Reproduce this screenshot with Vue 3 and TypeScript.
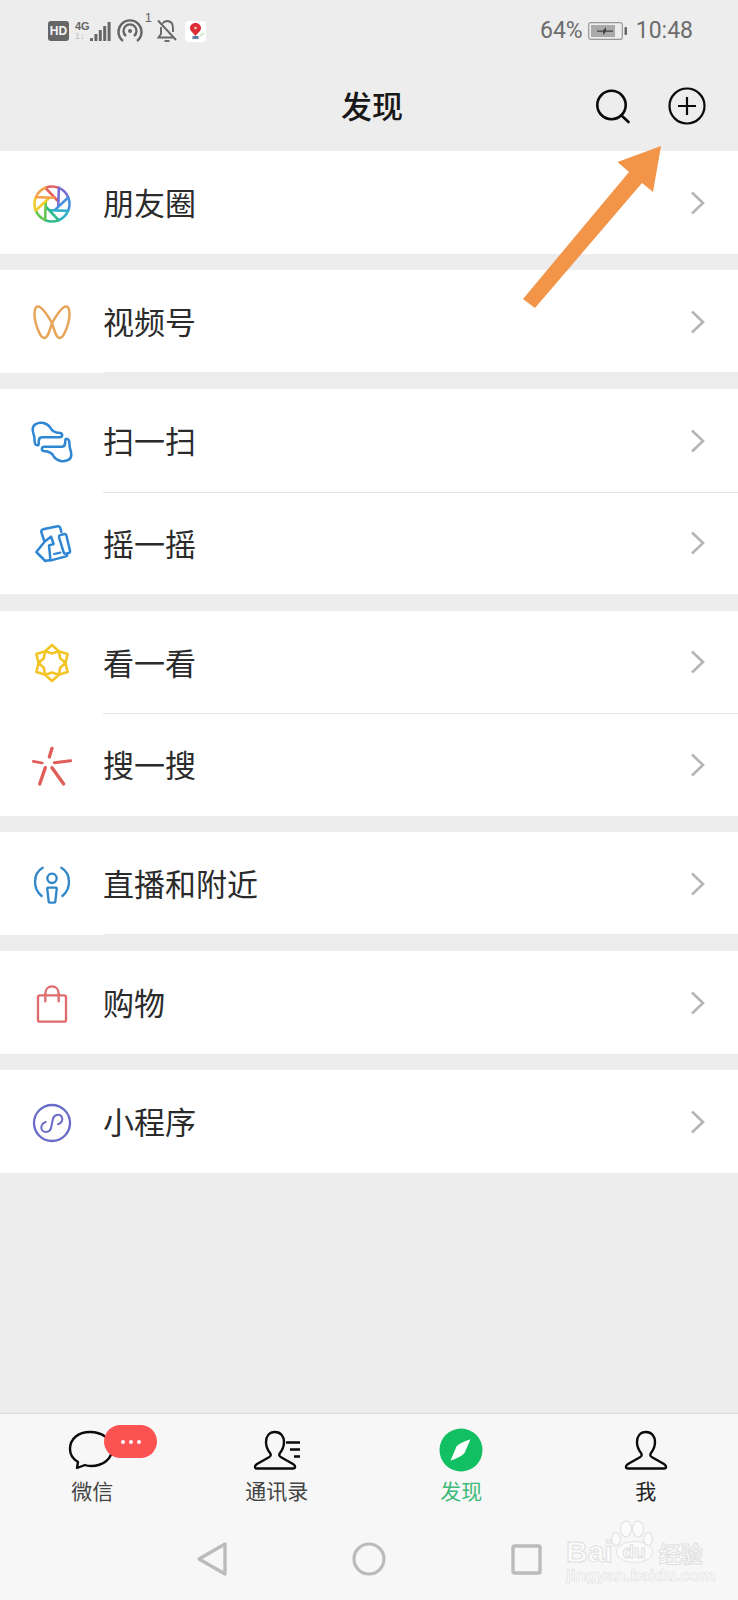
<template>
  <div class="phone">
    <header class="top">
      <div class="status">
        <span class="hd">HD</span>
        <span class="net"><b>4G</b><i>1↓</i></span>
        <svg class="bars" width="22" height="22" viewBox="0 0 22 22">
          <rect v-for="(h, i) in barHeights" :key="i" :x="i * 4.4 + 1" :y="21 - h" width="3" :height="h" rx="0.6" fill="#666" />
        </svg>
        <svg class="hotspot" width="26" height="26" viewBox="0 0 26 26" fill="none" stroke="#666" stroke-width="2.4">
          <path d="M6 23 A11.5 11.5 0 1 1 20 23" />
          <path d="M9 18 A6.5 6.5 0 1 1 17 18" />
          <circle cx="13" cy="13" r="2" fill="#666" stroke="none" />
        </svg>
        <span class="hot-count">1</span>
        <svg class="bell" width="22" height="24" viewBox="0 0 22 24" fill="none" stroke="#666" stroke-width="1.9">
          <path d="M5 8 V15 L2.5 18.5 H17" />
          <path d="M6.5 4.5 C8 2.5 10 2 11 2 C15 2 17 5 17 9 V13" />
          <path d="M2 1.5 L20 21" />
          <path d="M8.5 22 H13.5" />
        </svg>
        <span class="app-tile">
          <svg width="21" height="21" viewBox="0 0 21 21">
            <path d="M10.5 2 C6.8 2 5 4.8 5 7.2 C5 10.4 8.6 11.8 10.5 15 C12.4 11.8 16 10.4 16 7.2 C16 4.8 14.2 2 10.5 2Z" fill="#dd2c36" />
            <rect x="7.5" y="15" width="6" height="3" fill="#5d7fa8" />
            <path d="M15 15 L19 12" stroke="#cfe8c4" stroke-width="2" />
            <circle cx="10.5" cy="7" r="1.3" fill="#f7c9c9" />
          </svg>
        </span>
        <span class="spacer"></span>
        <span class="percent">64%</span>
        <svg class="battery" width="40" height="20" viewBox="0 0 40 20">
          <rect x="0.7" y="1.7" width="33.6" height="16.6" rx="2" fill="none" stroke="#999" stroke-width="1.2" />
          <rect x="3" y="4" width="24" height="12" fill="#aaa" />
          <path d="M9 9.5 H15 L18 6 V9.5 H25 V10.8 H18 L15 14 V10.8 H9Z" fill="#444" />
          <rect x="36.5" y="6" width="2.5" height="8" rx="0.8" fill="#666" />
        </svg>
        <span class="clock">10:48</span>
      </div>
      <div class="titlebar">
        <h1>发现</h1>
        <div class="actions">
          <svg width="40" height="40" viewBox="0 0 40 40" fill="none" stroke="#0a0a0a" stroke-width="2.6" stroke-linecap="round">
            <circle cx="18.5" cy="19" r="14.2" />
            <path d="M28.5 29.5 L35.5 36" />
          </svg>
          <svg width="40" height="40" viewBox="0 0 40 40" fill="none" stroke="#0a0a0a" stroke-width="2.2">
            <circle cx="20" cy="20" r="17.5" />
            <path d="M11 20 H29 M20 11 V29" />
          </svg>
        </div>
      </div>
    </header>

    <main class="list">
      <section v-for="(group, g) in groups" :key="g" class="group">
        <template v-for="(row, r) in group" :key="row.label">
          <div v-if="r > 0" class="divider"></div>
          <div class="row">
            <svg class="row-icon" width="44" height="44" :viewBox="row.box" fill="none" stroke-linecap="round" stroke-linejoin="round">
              <path
                v-for="(p, i) in row.paths"
                :key="i"
                :d="p.d"
                :stroke="p.color"
                :stroke-width="p.width"
                :fill="p.fill ?? 'none'"
                :transform="p.transform"
              />
            </svg>
            <span class="label">{{ row.label }}</span>
            <svg class="chevron" width="16" height="24" viewBox="0 0 16 24" fill="none" stroke="#b5b5b5" stroke-width="2.6">
              <path d="M2 1.5 L13 12 L2 22.5" />
            </svg>
          </div>
        </template>
        <div v-if="trailingLine.includes(g)" class="divider faint"></div>
      </section>
    </main>

    <footer class="bottom">
      <nav class="tabs">
        <div class="tab">
          <svg width="48" height="40" viewBox="0 0 48 40" fill="none" stroke="#0a0a0a" stroke-width="2.4" stroke-linejoin="round">
            <path d="M22 2 C10 2 2 9 2 19 C2 25 5 29 10 32 L9 38 L17 35 C19 36 21 36 23 36 C35 36 44 29 44 19 C44 9 34 2 22 2Z" />
          </svg>
          <span class="tab-label">微信</span>
          <span class="badge"><i></i><i></i><i></i></span>
        </div>
        <div class="tab">
          <svg width="48" height="40" viewBox="0 0 48 40" fill="none" stroke="#0a0a0a" stroke-width="2.4" stroke-linejoin="round">
            <path :d="personPath" />
            <path d="M33 12.5 H47 M37 19.5 H47 M41 26.5 H47" stroke-width="2.6" />
          </svg>
          <span class="tab-label">通讯录</span>
        </div>
        <div class="tab">
          <svg width="44" height="44" viewBox="0 0 44 44" class="found-icon">
            <circle cx="22" cy="22" r="21.5" fill="#12bf62" />
            <path d="M31.5 11.3 Q21 14.5 17.5 18.5 L11.5 32.7 Q22 29 25.5 25Z" fill="#fff" />
          </svg>
          <span class="tab-label active">发现</span>
        </div>
        <div class="tab">
          <svg width="44" height="40" viewBox="0 0 44 40" fill="none" stroke="#0a0a0a" stroke-width="2.4" stroke-linejoin="round">
            <path :d="personPath" />
          </svg>
          <span class="tab-label dark">我</span>
        </div>
      </nav>
      <div class="sysnav">
        <svg width="32" height="36" viewBox="0 0 32 36" fill="none" stroke="#bbb" stroke-width="3.4" stroke-linejoin="round">
          <path d="M29 3 L3 18 L29 33Z" />
        </svg>
        <svg width="34" height="34" viewBox="0 0 34 34" fill="none" stroke="#bbb" stroke-width="3.2">
          <circle cx="17" cy="17" r="15" />
        </svg>
        <svg width="31" height="31" viewBox="0 0 31 31" fill="none" stroke="#bbb" stroke-width="3.4" stroke-linejoin="round">
          <rect x="2" y="2" width="27" height="27" rx="1.5" />
        </svg>
      </div>
    </footer>

    <div class="watermark">
      <svg class="paw" width="42" height="30" viewBox="0 0 42 30" fill="#fbfbfb" stroke="#e4e4e4" stroke-width="1.3">
        <ellipse cx="5" cy="19" rx="4.5" ry="6.5" />
        <ellipse cx="15" cy="9" rx="5.5" ry="8" />
        <ellipse cx="27" cy="9" rx="5.5" ry="8" />
        <ellipse cx="37" cy="19" rx="4.5" ry="6.5" />
      </svg>
      <div class="wm-main"><span>Bai</span><em>du</em><span class="wm-cn">经验</span></div>
      <div class="wm-url">jingyan.baidu.com</div>
    </div>

    <svg class="pointer" width="150" height="170" viewBox="0 0 150 170">
      <path d="M143 1 L99.5 17 L111 27 L5 154 L17 163 L124 38 L135 47Z" fill="#f29549" />
    </svg>
  </div>
</template>

<script setup lang="ts">
interface IconPath {
  d: string;
  color: string;
  width: number;
  fill?: string;
  transform?: string;
}

interface Row {
  label: string;
  box: string;
  paths: IconPath[];
}

const barHeights = [3, 7, 11, 15, 19];

// groups whose single row still keeps the inset line under it
const trailingLine = [1, 4];

const personPath =
  "M22 2 C16 2 13 6.5 13 12 C13 17 15 20.5 17 23 C18.5 25 17.5 26.5 15.5 27.5 L4 34 C1 36 1.5 38.5 4 38.5 H40 C42.5 38.5 43 36 40 34 L28.5 27.5 C26.5 26.5 25.5 25 27 23 C29 20.5 31 17 31 12 C31 6.5 28 2 22 2Z";

function polar(cx: number, cy: number, r: number, deg: number) {
  const a = (deg * Math.PI) / 180;
  return `${(cx + r * Math.cos(a)).toFixed(2)} ${(cy + r * Math.sin(a)).toFixed(2)}`;
}

function circle(cx: number, cy: number, r: number) {
  return `M${cx - r} ${cy} a${r} ${r} 0 1 0 ${r * 2} 0 a${r} ${r} 0 1 0 ${-r * 2} 0Z`;
}

// shutter: one coloured arc and one blade per segment
function momentsPaths(): IconPath[] {
  const colors = ["#e2615f", "#7a6ed2", "#4a8fdf", "#2fb0c8", "#2fbb8c", "#62c650", "#f0cb2c", "#f3a44c"];
  const step = 360 / colors.length;
  return colors.map((color, i) => {
    const start = -112 + i * step;
    return {
      d: `M${polar(22, 22, 17.5, start)} A17.5 17.5 0 0 1 ${polar(22, 22, 17.5, start + step)} M${polar(22, 22, 17.5, start)} L${polar(22, 22, 6.5, start + 82)}`,
      color,
      width: 2.6,
    };
  });
}

// rounded six-point star, with a small diamond at each tip
function starPaths(): IconPath[] {
  let outer = "";
  let inner = "";
  for (let i = 0; i < 12; i++) {
    const deg = -90 + i * 30;
    outer += `${i ? "L" : "M"}${polar(22, 22, i % 2 ? 13.5 : 18, deg)} `;
    inner += `${i ? "L" : "M"}${polar(22, 22, i % 2 ? 13.5 : 9.5, deg)} `;
  }
  return [{ d: `${outer}Z ${inner}Z`, color: "#f2c426", width: 2.6 }];
}

const blue = "#2f87d3";

const scanBlade =
  "M112 850 C102 850 103 840 102 825 C98 810 92 795 105 787 C120 778 140 782 150 797 C155 808 165 812 180 813 C188 815 187 826 178 826 L125 826 C115 826 115 835 115 845 C115 850 113 850 112 850Z";

const groups: Row[][] = [
  [{ label: "朋友圈", box: "0 0 44 44", paths: momentsPaths() }],
  [
    {
      label: "视频号",
      box: "0 0 44 44",
      paths: [
        {
          d: "M22 22 C18 15 12 5.5 8 5.5 C5 5.5 4.5 9 4.5 13 C4.5 21 9.5 37 14.5 37 C18 37 20 28 22 22 C24 28 26 37 29.5 37 C34.5 37 39.5 21 39.5 13 C39.5 9 39 5.5 36 5.5 C32 5.5 26 15 22 22Z",
          color: "#e8a558",
          width: 2.5,
        },
      ],
    },
  ],
  [
    {
      label: "扫一扫",
      box: "89 774 132 132",
      paths: [
        { d: scanBlade, color: blue, width: 7.5 },
        { d: scanBlade, color: blue, width: 7.5, transform: "rotate(180 155 840)" },
      ],
    },
    {
      label: "摇一摇",
      box: "89 1082 132 132",
      paths: [
        { d: "M131 1137 L123 1112 Q122 1106 128 1104 L172 1095 Q178 1094 180 1100 L183 1112", color: blue, width: 7.5 },
        { d: "M178 1122 L192 1118 Q197 1117 198 1122 L209 1168 Q210 1174 205 1175 L196 1177 Q191 1178 190 1173 L176 1128 Q175 1123 178 1122Z", color: blue, width: 7.5 },
        { d: "M108 1172 L134 1140 L152 1126 L160 1148 L146 1152 L150 1192 Q151 1198 145 1197 L135 1199 Z", color: blue, width: 7.5 },
        { d: "M152 1197 L197 1185 Q202 1183 200 1178", color: blue, width: 7.5 },
        { d: "M161 1178 L180 1174", color: blue, width: 6.5 },
      ],
    },
  ],
  [
    { label: "看一看", box: "0 0 44 44", paths: starPaths() },
    {
      label: "搜一搜",
      box: "89 371 132 132",
      paths: [
        { d: "M155 384 L147 410", color: "#e05d59", width: 10 },
        { d: "M211 421 L162 427", color: "#e05d59", width: 9 },
        { d: "M155 442 L190 491", color: "#e05d59", width: 10 },
        { d: "M135 442 L118 491", color: "#e05d59", width: 10 },
        { d: "M99 423 L126 428", color: "#e05d59", width: 8 },
      ],
    },
  ],
  [
    {
      label: "直播和附近",
      box: "89 729 132 132",
      paths: [
        { d: "M127 743 C98 760 96 805 124 828 M183 743 C212 760 214 805 186 828", color: "#2f87c9", width: 7 },
        { d: circle(155, 775, 14), color: "#2f87c9", width: 7 },
        { d: "M143 803 H167 Q170 803 169 808 L165 844 Q165 848 161 848 H149 Q145 848 145 844 L141 808 Q140 803 143 803Z", color: "#2f87c9", width: 7 },
      ],
    },
  ],
  [
    {
      label: "购物",
      box: "89 152 132 132",
      paths: [
        { d: "M119 192 H191 Q197 192 197 198 V265 Q197 271 191 271 H119 Q113 271 113 265 V198 Q113 192 119 192Z", color: "#e06a6c", width: 7 },
        { d: "M135 210 V187 C135 158 175 158 175 187 V210", color: "#e06a6c", width: 7 },
      ],
    },
  ],
  [
    {
      label: "小程序",
      box: "89 509 132 132",
      paths: [
        { d: circle(155, 575, 54), color: "#6b6cc8", width: 7 },
        { d: "M136 572 C124 575 120 588 125 596 C132 606 149 603 152 590 L158 562 C161 549 178 547 184 556 C189 565 184 576 173 579", color: "#6b6cc8", width: 6 },
      ],
    },
  ],
];
</script>

<style scoped>
.phone {
  position: relative;
  display: flex;
  flex-direction: column;
  width: 738px;
  height: 1600px;
  overflow: hidden;
  background: #ededed;
  font-family: "Noto Sans CJK SC", "Noto Sans", sans-serif;
}

.top {
  height: 151px;
  flex: none;
}

.status {
  display: flex;
  align-items: center;
  height: 62px;
  padding: 0 45px 0 48px;
  color: #666;
}

.hd {
  width: 21px;
  height: 20px;
  border-radius: 3px;
  background: #666;
  color: #f4f4f4;
  font: 700 12px/20px "Liberation Sans", sans-serif;
  text-align: center;
}

.net {
  display: flex;
  flex-direction: column;
  margin-left: 6px;
  font-family: "Liberation Sans", sans-serif;
  line-height: 10px;
}

.net b {
  font-size: 11px;
  color: #666;
}

.net i {
  font-size: 9px;
  font-style: normal;
  color: #bbb;
}

.bars {
  margin-left: -1px;
}

.hotspot {
  margin-left: 6px;
}

.hot-count {
  align-self: flex-start;
  margin: 11px 0 0 2px;
  font: 13px/14px "Liberation Sans", sans-serif;
}

.bell {
  margin-left: 4px;
}

.app-tile {
  display: block;
  width: 21px;
  height: 21px;
  margin-left: 7px;
  border-radius: 4px;
  background: #fff;
}

.spacer {
  flex: 1;
}

.percent,
.clock {
  font: 23px/26px Roboto, "Noto Sans", sans-serif;
  color: #6c6c6c;
}

.battery {
  margin: 0 8px 0 5px;
}

.titlebar {
  position: relative;
  display: flex;
  align-items: center;
  justify-content: center;
  height: 89px;
  padding: 0 0 5px 6px;
  box-sizing: border-box;
}

.titlebar h1 {
  margin: 0;
  font-size: 31px;
  font-weight: 500;
  color: #181818;
}

.actions {
  position: absolute;
  top: 24px;
  right: 31px;
  display: flex;
  gap: 34px;
}

.list {
  flex: 1;
}

.group {
  margin-bottom: 16.5px;
  background: #fff;
}

.row {
  display: flex;
  align-items: center;
  height: 102.5px;
  padding: 3px 32px 0 30px;
  box-sizing: border-box;
}

.divider {
  height: 1px;
  margin: 0 0 -1px 103px;
  background: #e4e4e4;
}

.divider.faint {
  margin: -1px 0 0 103px;
  background: #eaeaea;
}

.row-icon {
  flex: none;
  margin-right: 29px;
}

.label {
  flex: 1;
  padding-bottom: 4px;
  font-size: 31px;
  color: #2b2b2b;
}

.chevron {
  margin-bottom: 2px;
}

.bottom {
  flex: none;
  height: 187px;
  border-top: 1px solid #d9d9d9;
  background: #f7f7f7;
  box-sizing: border-box;
}

.tabs {
  display: grid;
  grid-template-columns: repeat(4, 1fr);
  height: 96px;
}

.tab {
  position: relative;
  display: flex;
  flex-direction: column;
  align-items: center;
  padding-top: 16px;
}

.tab svg {
  height: 40px;
  flex: none;
}

.tab .found-icon {
  height: 44px;
  margin-top: -2px;
  margin-bottom: -2px;
}

.tab-label {
  margin-top: 6px;
  font-size: 21px;
  line-height: 28px;
  color: #444;
}

.tab-label.active {
  color: #3dba78;
}

.tab-label.dark {
  color: #222;
}

.badge {
  position: absolute;
  top: 11px;
  left: 104px;
  display: flex;
  align-items: center;
  justify-content: center;
  gap: 4px;
  width: 53px;
  height: 33px;
  border-radius: 17px;
  background: #fb5252;
}

.badge i {
  width: 4px;
  height: 4px;
  border-radius: 50%;
  background: #fff;
}

.sysnav {
  display: grid;
  grid-template-columns: repeat(3, 157.5px);
  justify-content: center;
  justify-items: center;
  align-items: center;
  height: 36px;
  margin-top: 31px;
}

.watermark {
  position: absolute;
  top: 1520px;
  left: 566px;
  width: 160px;
  color: #fbfbfb;
}

.paw {
  position: absolute;
  top: 0;
  left: 45px;
}

.wm-main {
  display: flex;
  align-items: center;
  margin-top: 20px;
  height: 24px;
  white-space: nowrap;
  font: 700 30px/24px "Liberation Sans", sans-serif;
  -webkit-text-stroke: 1px #e0e0e0;
}

.wm-main em {
  flex: none;
  width: 37px;
  height: 22px;
  margin-left: 3px;
  border-radius: 50%;
  background: #fbfbfb;
  border: 1px solid #e4e4e4;
  box-sizing: border-box;
  font-size: 19px;
  line-height: 20px;
  font-style: normal;
  text-align: center;
}

.wm-cn {
  flex: none;
  margin-left: 6px;
  font: 700 22px/24px "Noto Sans CJK SC", sans-serif;
}

.wm-url {
  margin-top: 3px;
  white-space: nowrap;
  font: 700 17px/18px "Liberation Sans", sans-serif;
  -webkit-text-stroke: 0.7px #e4e4e4;
}

.pointer {
  position: absolute;
  top: 145px;
  left: 518px;
}
</style>
